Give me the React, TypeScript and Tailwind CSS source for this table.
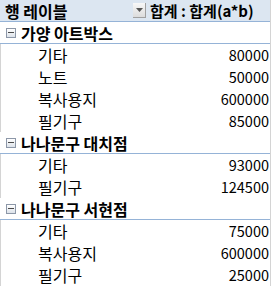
import React from "react";

type Row = { kind: "group"; label: string } | { kind: "item"; label: string; value: string };

const rows: Row[] = [
  { kind: "group", label: "가양 아트박스" },
  { kind: "item", label: "기타", value: "80000" },
  { kind: "item", label: "노트", value: "50000" },
  { kind: "item", label: "복사용지", value: "600000" },
  { kind: "item", label: "필기구", value: "85000" },
  { kind: "group", label: "나나문구 대치점" },
  { kind: "item", label: "기타", value: "93000" },
  { kind: "item", label: "필기구", value: "124500" },
  { kind: "group", label: "나나문구 서현점" },
  { kind: "item", label: "기타", value: "75000" },
  { kind: "item", label: "복사용지", value: "600000" },
  { kind: "item", label: "필기구", value: "25000" },
];

function MinusBox() {
  return (
    <div className="w-[10px] h-[10px] border border-[#8c97a8] bg-gradient-to-b from-[#ffffff] to-[#dde3ea] flex items-center justify-center mr-[5px]">
      <div className="w-[6px] h-px bg-[#4a4a4a]" />
    </div>
  );
}

export default function App() {
  return (
    <div
      className="w-[273px] h-[287px] bg-white text-black overflow-hidden"
      style={{ fontFamily: '"Noto Sans CJK KR", "Noto Sans", sans-serif' }}
    >
      <div className="w-[271px] border-r border-[#d4d4d4] text-[16px] leading-[16px]">
        <div className="h-[22px] bg-[#dce6f1] border-b border-[#95b3d7] flex items-center font-bold">
          <div className="w-[133px] pl-[5px]">행 레이블</div>
          <div className="w-[13px] h-[15px] bg-gradient-to-b from-[#f8f8f8] to-[#dcdcdc] border-r border-b border-[#a0a0a0] flex items-center justify-center mr-[4px]">
            <svg width="7" height="4" viewBox="0 0 7 4">
              <polygon points="0,0 7,0 3.5,4" fill="#555" />
            </svg>
          </div>
          <div className="text-[15px]">합계 : 합계(a*b)</div>
        </div>
        {rows.map((r, i) =>
          r.kind === "group" ? (
            <div key={i} className="h-[22px] border-b border-[#95b3d7] flex items-center pl-[6px] font-bold">
              <MinusBox />
              <span>{r.label}</span>
            </div>
          ) : (
            <div key={i} className="h-[22px] border-l border-[#d4d4d4] flex items-center justify-between pl-[37px] pr-[1px]">
              <span>{r.label}</span>
              <span className="text-[14.5px]">{r.value}</span>
            </div>
          )
        )}
      </div>
    </div>
  );
}
